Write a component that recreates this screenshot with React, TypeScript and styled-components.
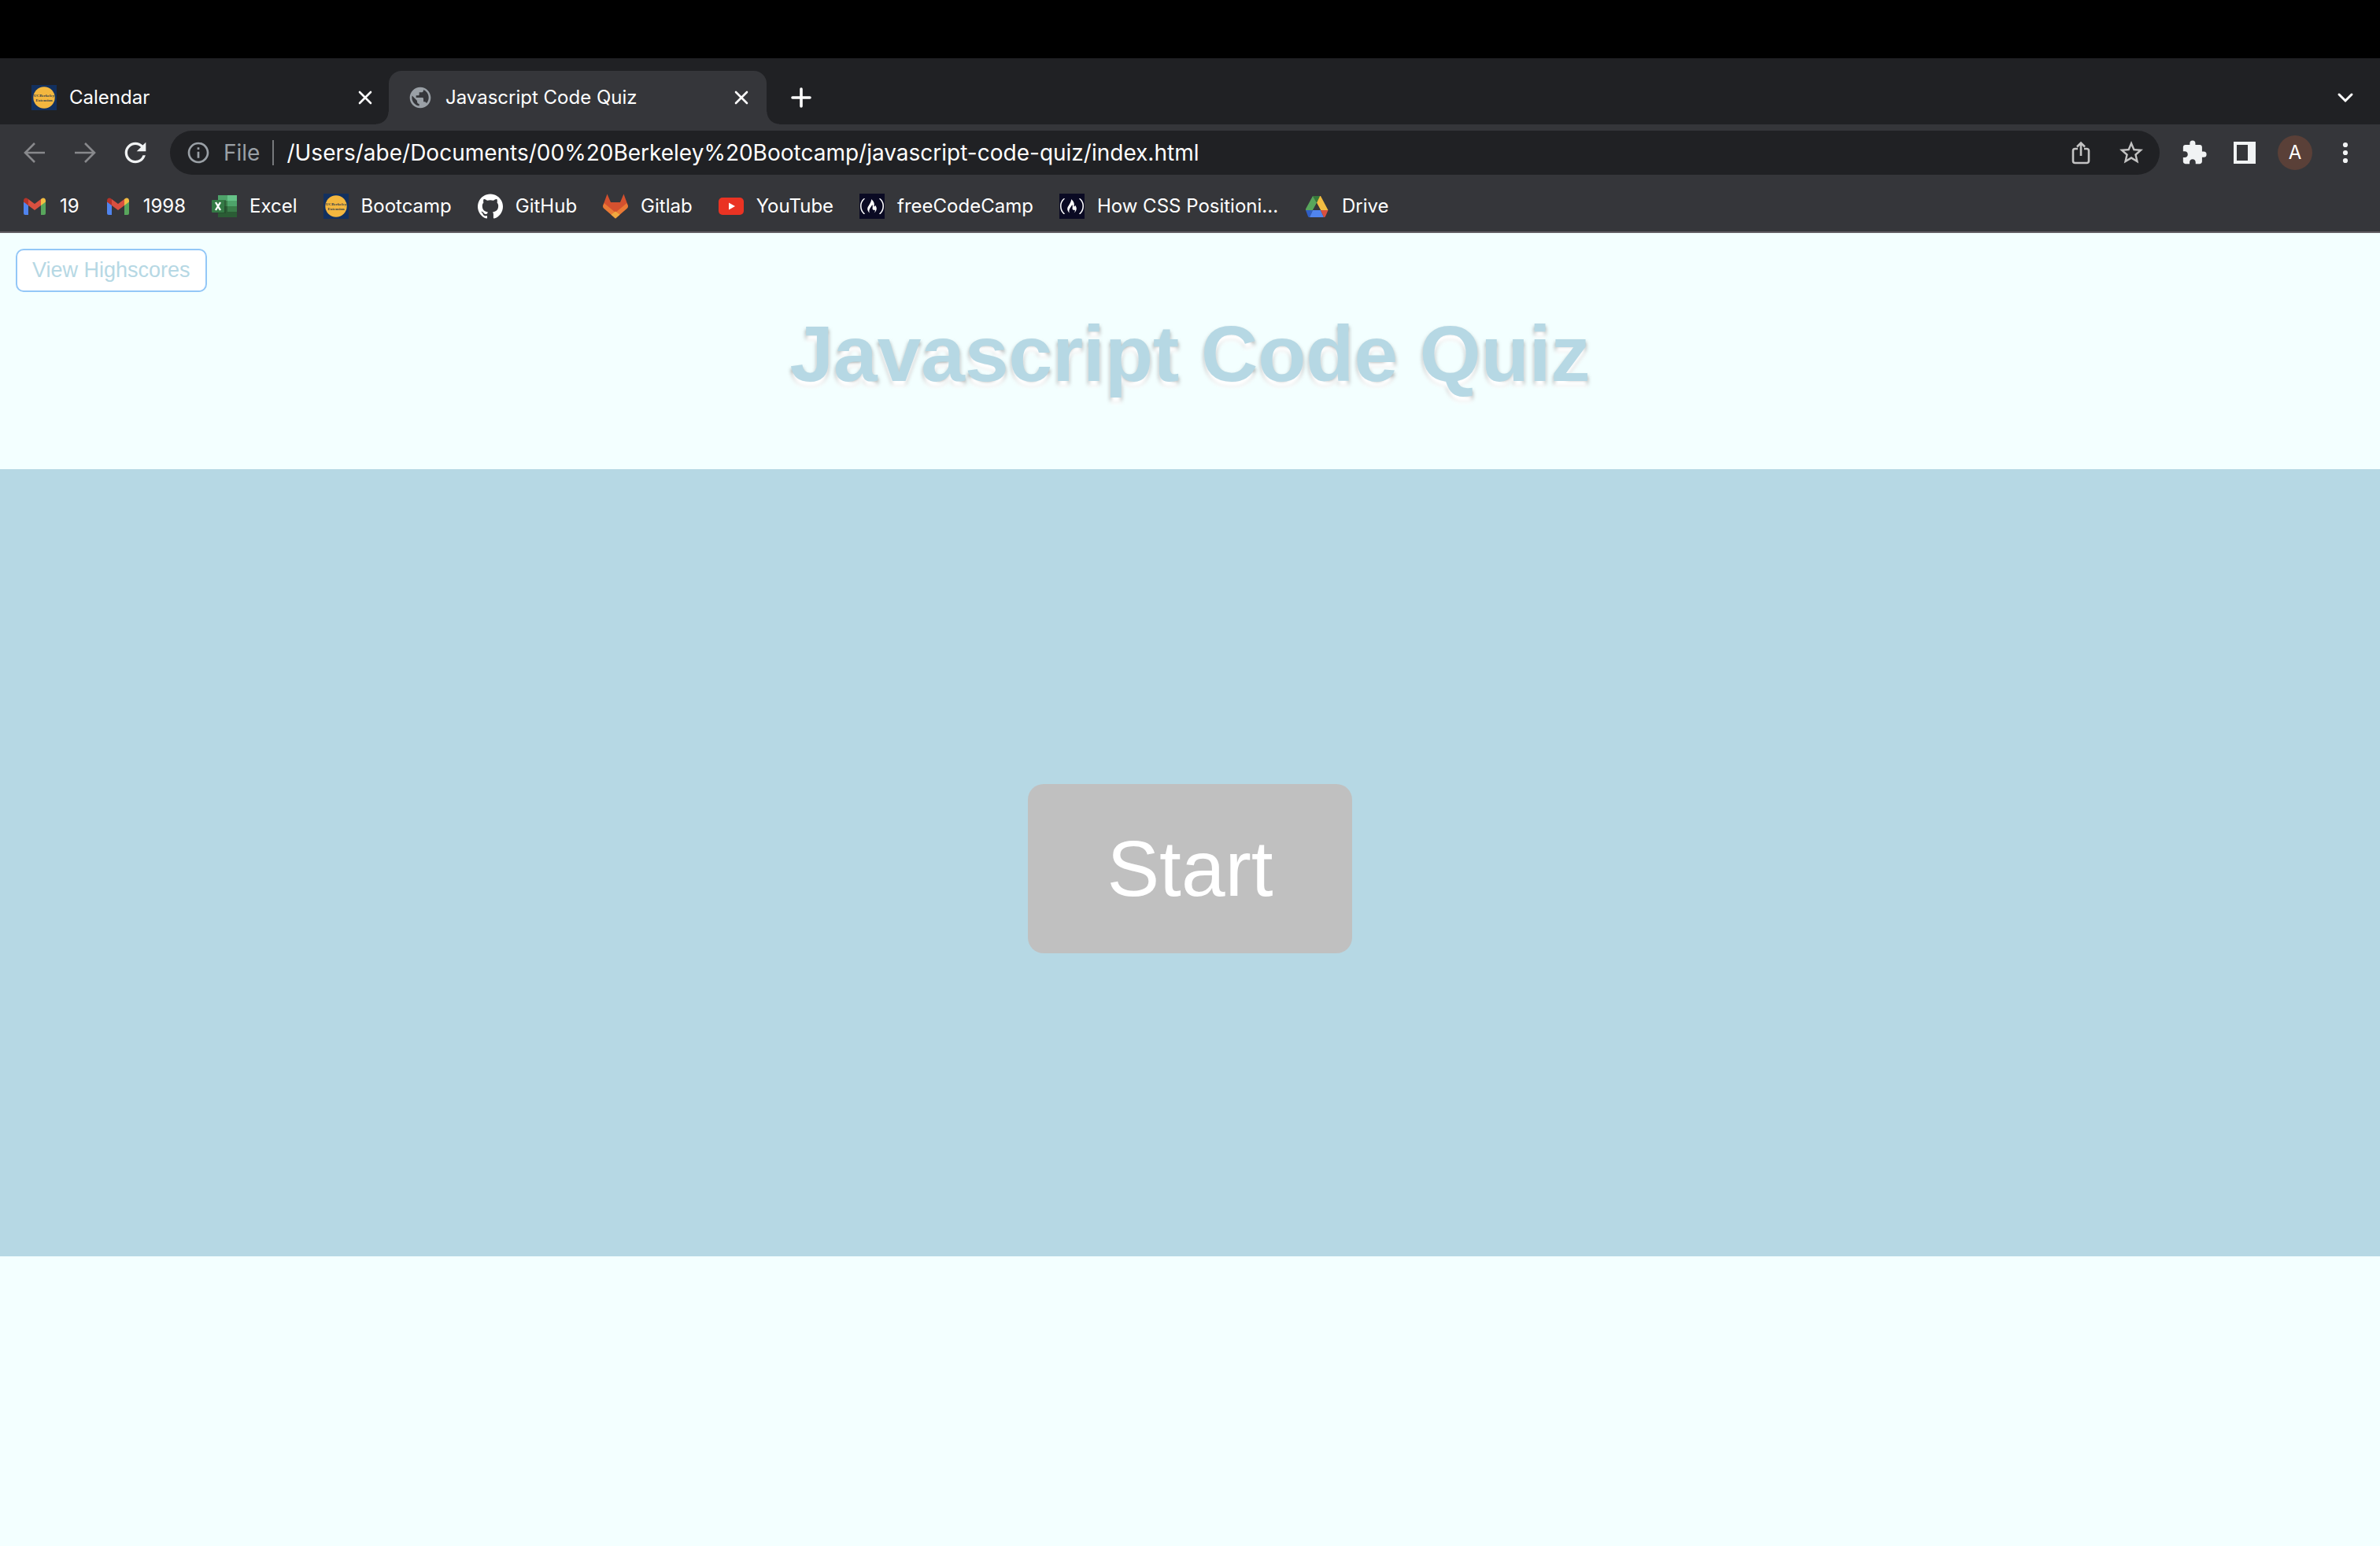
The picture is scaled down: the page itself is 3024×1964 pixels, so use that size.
import React from 'react';
import styled, { createGlobalStyle } from 'styled-components';
import { MdExtension, MdInfoOutline, MdPublic, MdRefresh, MdStarBorder } from 'react-icons/md';
import { SiFreecodecamp, SiGithub } from 'react-icons/si';

const uiFont = `Inter, "Liberation Sans", sans-serif`;
const pageFont = `"Liberation Sans", Arial, sans-serif`;

const GlobalStyle = createGlobalStyle`
  *, *::before, *::after { box-sizing: border-box; }
  body { margin: 0; background: #f3ffff; }
  button, input { font: inherit; color: inherit; border: 0; padding: 0; margin: 0; background: none; }
  svg { display: block; flex: none; }
`;

const Screen = styled.div`
  min-height: 100vh;
  display: flex;
  flex-direction: column;
`;

const MenuStrip = styled.div`
  height: 74px;
  background: #000;
`;

const Browser = styled.header`
  font-family: ${uiFont};
  font-size: 24px;
  line-height: 32px;
  color: #fff;
  background: #35363a;
  border-bottom: 2px solid #635f64;
`;

const TabStrip = styled.div`
  display: flex;
  align-items: center;
  height: 84px;
  padding: 16px 28px 0 16px;
  background: #202124;
`;

const Tab = styled.div<{ $active?: boolean }>`
  position: relative;
  display: flex;
  align-items: center;
  align-self: stretch;
  width: 480px;
  margin-left: ${(p) => (p.$active ? '-2px' : '0')};
  padding: 0 16px 0 24px;
  border-radius: 16px 16px 0 0;
  background: ${(p) => (p.$active ? '#35363a' : 'transparent')};

  &::before,
  &::after {
    content: '';
    display: ${(p) => (p.$active ? 'block' : 'none')};
    position: absolute;
    bottom: 0;
    width: 16px;
    height: 16px;
  }
  &::before {
    right: 100%;
    background: radial-gradient(circle at 0 0, #202124 15px, #35363a 16px);
  }
  &::after {
    left: 100%;
    background: radial-gradient(circle at 100% 0, #202124 15px, #35363a 16px);
  }
`;

const TabTitle = styled.button`
  flex: 1;
  display: flex;
  align-items: center;
  gap: 16px;
  text-align: left;
`;

const IconButton = styled.button<{ $size?: number }>`
  flex: none;
  display: grid;
  place-items: center;
  width: ${(p) => p.$size ?? 64}px;
  height: ${(p) => p.$size ?? 64}px;
`;

const NewTab = styled(IconButton)`
  margin-left: 12px;
`;

const TabSearch = styled(IconButton)`
  margin: 0 -16px 0 auto;
`;

const Toolbar = styled.div`
  display: flex;
  align-items: center;
  height: 72px;
  padding: 0 12px;
`;

const Omnibox = styled.form`
  flex: 1;
  display: flex;
  align-items: center;
  height: 56px;
  margin: 0 12px;
  padding: 0 4px 0 20px;
  border-radius: 28px;
  background: #202124;
  font-size: 28px;
`;

const Scheme = styled.label`
  display: flex;
  align-items: center;
  gap: 16px;
  padding-right: 16px;
  border-right: 2px solid #77797c;
  color: #9aa0a6;
`;

const Address = styled.input`
  flex: 1;
  min-width: 0;
  height: 40px;
  padding-left: 16px;
  outline: none;
`;

const Avatar = styled.span`
  display: grid;
  place-items: center;
  width: 44px;
  height: 44px;
  border-radius: 50%;
  background: #5a4038;
  font-size: 24px;
`;

const Bookmarks = styled.nav`
  display: flex;
  align-items: center;
  gap: 33px;
  height: 64px;
  padding: 0 28px;
`;

const Bookmark = styled.a`
  display: flex;
  align-items: center;
  gap: 16px;
  color: inherit;
  text-decoration: none;
  white-space: nowrap;
`;

const Page = styled.main`
  flex: 1;
  font-family: ${pageFont};
  color: #b6d8e4;
`;

const PageHeader = styled.div`
  display: flex;
  flex-direction: column;
  height: 300px;
  padding: 20px;
`;

const HighscoresButton = styled.button`
  align-self: flex-start;
  padding: 10px 19px;
  border: 2px solid #93c7f7;
  border-radius: 10px;
  background: #fff;
  font-size: 27px;
  line-height: 31px;
`;

const Title = styled.h1`
  margin: 20px 0 0;
  font-size: 100px;
  line-height: 116px;
  text-align: center;
  text-shadow: 0 8px 5px #fff, 0 4px 5px rgba(0, 0, 0, 0.5);
`;

const QuizArea = styled.section`
  display: flex;
  justify-content: center;
  align-items: flex-start;
  height: 1000px;
  padding-top: 400px;
  background: #b6d8e4;
`;

const StartButton = styled.button`
  padding: 50px 100px;
  border-radius: 20px;
  background: #c0c0c0;
  color: #fff;
  font-size: 100px;
  line-height: 115px;
`;

const BerkeleyIcon = () => (
  <svg width="32" height="32" viewBox="0 0 32 32" aria-hidden="true">
    <rect width="32" height="32" fill="#12305f" />
    <circle cx="16" cy="16" r="13.7" fill="#f3b73f" />
    <g fill="#2c3a4c" fontFamily="Liberation Serif, serif" fontWeight="700" fontSize="5" textAnchor="middle">
      <text x="16" y="15">UCBerkeley</text>
      <text x="16" y="21">Extension</text>
    </g>
  </svg>
);

const GmailIcon = () => (
  <svg width="32" height="32" viewBox="0 0 32 32" aria-hidden="true">
    <path d="M2 10v15a2 2 0 0 0 2 2h4V14z" fill="#5084ee" />
    <path d="M24 14v13h4a2 2 0 0 0 2-2V10z" fill="#58a65c" />
    <path d="M24 7v8l6-4.500V9c0-3.200-3-4.200-5-2.800z" fill="#f2bd42" />
    <path d="M8 7v8l8 6 8-6V7l-8 6z" fill="#d95040" />
    <path d="M2 9v1.500L8 15V7L7 6.200C5 4.800 2 5.800 2 9z" fill="#b4342a" />
  </svg>
);

const ExcelIcon = () => (
  <svg width="32" height="32" viewBox="0 0 32 32" aria-hidden="true">
    <path d="M8 2h12v7H8z" fill="#4ea36a" />
    <path d="M20 2h12v7H20z" fill="#66c388" />
    <path d="M8 9h12v7H8z" fill="#3a7d49" />
    <path d="M20 9h12v7H20z" fill="#4ea36a" />
    <path d="M8 16h12v7H8z" fill="#2b5c35" />
    <path d="M20 16h12v7H20z" fill="#3a7d49" />
    <path d="M8 23h24v7H8z" fill="#2b5c35" />
    <path d="M8 8h10v17H8z" fill="#1f4328" opacity=".5" />
    <rect y="8" width="16" height="16" rx="1" fill="#347a45" />
    <path d="m5 11 6 10M11 11 5 21" stroke="#fff" strokeWidth="2.400" />
  </svg>
);

const GitlabIcon = () => (
  <svg width="32" height="32" viewBox="0 0 32 32" aria-hidden="true">
    <path d="M5.500.5 0 15.500 16 31.500 32 15.500 26.500.5 22 11H10z" fill="#d4512f" />
    <path d="M1.500 12 0 16q0 2 1.500 3L16 31.500 30.500 19q1.500-1 1.500-3l-1.500-4L16 24z" fill="#ea7a35" />
    <path d="m16 22.500 5.500 4.200L16 31.500l-5.500-4.800z" fill="#f0a93f" />
  </svg>
);

const YoutubeIcon = () => (
  <svg width="32" height="32" viewBox="0 0 32 32" aria-hidden="true">
    <rect y="5" width="32" height="22" rx="5" fill="#ea3323" />
    <path d="m13 11.500 8 4.500-8 4.500z" fill="#fff" />
  </svg>
);

const CampTile = styled.span`
  display: grid;
  place-items: center;
  width: 32px;
  height: 32px;
  background: #0a0a23;
`;

const CampIcon = () => (
  <CampTile>
    <SiFreecodecamp size={30} />
  </CampTile>
);

const DriveIcon = () => (
  <svg width="32" height="32" viewBox="0 0 32 32" aria-hidden="true">
    <path d="M11 3h10l-5 8.700z" fill="#37783a" />
    <path d="M11 3 2 19.500V21h9l5-9.300z" fill="#58a65c" />
    <path d="M21 3h-.8L16 11.700 21 21h9.500z" fill="#f2bd42" />
    <path d="M2 21h9l-4 9c-1.300 0-1.700-.5-2-1z" fill="#2f5ec4" />
    <path d="M11 21h10l4 9H7z" fill="#5084ee" />
    <path d="M21 21h9.500L27 29c-.5.700-1 1-2 1z" fill="#d95040" />
    <path d="m16 12 5 9H11z" fill="#35363a" />
  </svg>
);

const CloseIcon = () => (
  <svg width="20" height="20" viewBox="0 0 20 20" aria-hidden="true">
    <path d="m3 3 14 14M17 3 3 17" stroke="#fff" strokeWidth="2.600" strokeLinecap="round" />
  </svg>
);

const ArrowIcon = ({ forward }: { forward?: boolean }) => (
  <svg width="28" height="28" viewBox="0 0 28 28" fill="none" stroke="#88898c" strokeWidth="2.600" aria-hidden="true">
    <path d={forward ? 'M1 14h25M14 2l12 12-12 12' : 'M27 14H2M14 2 2 14l12 12'} />
  </svg>
);

const ShareIcon = () => (
  <svg width="32" height="32" viewBox="0 0 32 32" fill="none" stroke="#c3c3c3" strokeWidth="2.600" aria-hidden="true">
    <path d="M12 11H8.500A2.500 2.500 0 0 0 6 13.500v13A2.500 2.500 0 0 0 8.500 29h15a2.500 2.500 0 0 0 2.500-2.500v-13a2.500 2.500 0 0 0-2.500-2.500H20M16 20V4M11 8.500l5-5 5 5" />
  </svg>
);

const bookmarks = [
  { label: '19', Icon: GmailIcon },
  { label: '1998', Icon: GmailIcon },
  { label: 'Excel', Icon: ExcelIcon },
  { label: 'Bootcamp', Icon: BerkeleyIcon },
  { label: 'GitHub', Icon: () => <SiGithub size={32} /> },
  { label: 'Gitlab', Icon: GitlabIcon },
  { label: 'YouTube', Icon: YoutubeIcon },
  { label: 'freeCodeCamp', Icon: CampIcon },
  { label: 'How CSS Positioni...', Icon: CampIcon },
  { label: 'Drive', Icon: DriveIcon },
];

export default function App() {
  return (
    <Screen>
      <GlobalStyle />
      <MenuStrip />
      <Browser>
        <TabStrip>
          <Tab>
            <TabTitle>
              <BerkeleyIcon />
              Calendar
            </TabTitle>
            <IconButton $size={32} aria-label="Close Calendar">
              <CloseIcon />
            </IconButton>
          </Tab>
          <Tab $active>
            <TabTitle>
              <MdPublic size={32} color="#9aa0a6" />
              Javascript Code Quiz
            </TabTitle>
            <IconButton $size={32} aria-label="Close Javascript Code Quiz">
              <CloseIcon />
            </IconButton>
          </Tab>
          <NewTab aria-label="New tab">
            <svg width="28" height="28" viewBox="0 0 28 28" aria-hidden="true">
              <path d="M14 3v22M3 14h22" stroke="#fff" strokeWidth="3.600" strokeLinecap="round" />
            </svg>
          </NewTab>
          <TabSearch aria-label="Search tabs">
            <svg width="24" height="24" viewBox="0 0 24 24" aria-hidden="true">
              <path d="m4 8 8 8 8-8" fill="none" stroke="#fff" strokeWidth="3" strokeLinecap="round" />
            </svg>
          </TabSearch>
        </TabStrip>

        <Toolbar>
          <IconButton aria-label="Back">
            <ArrowIcon />
          </IconButton>
          <IconButton aria-label="Forward">
            <ArrowIcon forward />
          </IconButton>
          <IconButton aria-label="Reload">
            <MdRefresh size={40} color="#f1f3f4" />
          </IconButton>
          <Omnibox onSubmit={(e) => e.preventDefault()}>
            <Scheme htmlFor="address">
              <MdInfoOutline size={32} />
              File
            </Scheme>
            <Address
              id="address"
              defaultValue="/Users/abe/Documents/00%20Berkeley%20Bootcamp/javascript-code-quiz/index.html"
            />
            <IconButton type="button" aria-label="Share">
              <ShareIcon />
            </IconButton>
            <IconButton type="button" aria-label="Bookmark this page">
              <MdStarBorder size={36} color="#c3c3c3" />
            </IconButton>
          </Omnibox>
          <IconButton aria-label="Extensions">
            <MdExtension size={34} color="#f1f3f4" />
          </IconButton>
          <IconButton aria-label="Side panel">
            <svg width="28" height="28" viewBox="0 0 28 28" aria-hidden="true">
              <path d="M0 0h28v28H0zM4 4v20h14V4z" fill="#f1f3f4" fillRule="evenodd" />
            </svg>
          </IconButton>
          <IconButton aria-label="Profile">
            <Avatar>A</Avatar>
          </IconButton>
          <IconButton aria-label="Menu">
            <svg width="28" height="28" viewBox="0 0 28 28" fill="#f1f3f4" aria-hidden="true">
              <circle cx="14" cy="4" r="3.100" />
              <circle cx="14" cy="14" r="3.100" />
              <circle cx="14" cy="24" r="3.100" />
            </svg>
          </IconButton>
        </Toolbar>

        <Bookmarks aria-label="Bookmarks">
          {bookmarks.map(({ label, Icon }) => (
            <Bookmark key={label} href="#">
              <Icon />
              {label}
            </Bookmark>
          ))}
        </Bookmarks>
      </Browser>

      <Page>
        <PageHeader>
          <HighscoresButton>View Highscores</HighscoresButton>
          <Title>Javascript Code Quiz</Title>
        </PageHeader>
        <QuizArea>
          <StartButton>Start</StartButton>
        </QuizArea>
      </Page>
    </Screen>
  );
}
